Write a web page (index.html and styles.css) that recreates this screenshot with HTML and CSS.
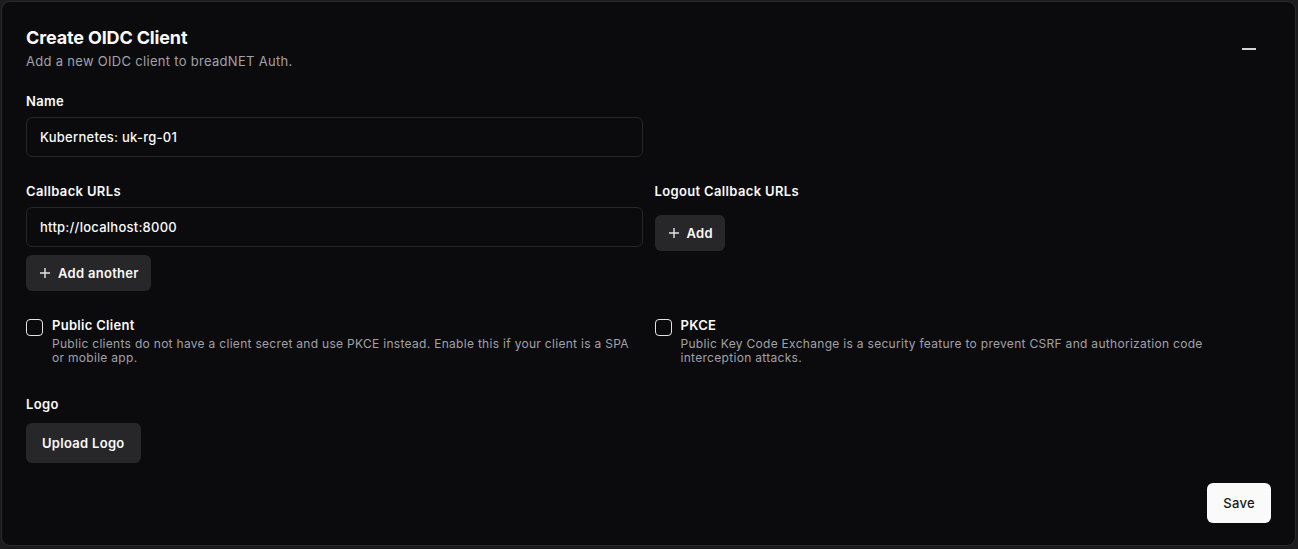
FILE: index.html
```html
<!DOCTYPE html>
<html lang="en">
<head>
<meta charset="utf-8">
<title>Create OIDC Client</title>
<link rel="stylesheet" href="styles.css">
</head>
<body>
<div class="card">
  <div class="header">
    <div class="heading">
      <h1 class="title">Create OIDC Client</h1>
      <p class="subtitle">Add a new OIDC client to breadNET Auth.</p>
    </div>
    <button class="icon-btn" aria-label="Collapse">
      <svg width="24" height="24" viewBox="0 0 24 24" fill="none" stroke="currentColor" stroke-width="2" stroke-linecap="butt"><path d="M5 12h14"/></svg>
    </button>
  </div>

  <div class="form">
    <div class="field">
      <label class="label">Name</label>
      <div class="input">Kubernetes: uk-rg-01</div>
    </div>
    <div></div>

    <div class="field">
      <label class="label">Callback URLs</label>
      <div class="input">http://localhost:8000</div>
      <button class="btn btn-secondary btn-sm add-btn"><svg class="plus" width="14" height="14" viewBox="0 0 14 14" fill="none" stroke="currentColor" stroke-width="1.4"><path d="M2 7h10M7 2v10"/></svg>Add another</button>
    </div>
    <div class="field">
      <label class="label">Logout Callback URLs</label>
      <button class="btn btn-secondary btn-sm add-btn"><svg class="plus" width="14" height="14" viewBox="0 0 14 14" fill="none" stroke="currentColor" stroke-width="1.4"><path d="M2 7h10M7 2v10"/></svg>Add</button>
    </div>

    <div class="check">
      <span class="box"></span>
      <div class="check-text">
        <div class="check-label">Public Client</div>
        <div class="check-desc">Public clients do not have a client secret and use PKCE instead. Enable this if your client is a SPA or mobile app.</div>
      </div>
    </div>
    <div class="check">
      <span class="box"></span>
      <div class="check-text">
        <div class="check-label">PKCE</div>
        <div class="check-desc">Public Key Code Exchange is a security feature to prevent CSRF and authorization code interception attacks.</div>
      </div>
    </div>

    <div class="field logo-field">
      <label class="label">Logo</label>
      <button class="btn btn-secondary upload-btn">Upload Logo</button>
    </div>
  </div>

  <div class="footer">
    <button class="btn btn-primary">Save</button>
  </div>
</div>
</body>
</html>
```

FILE: styles.css
```css
* { box-sizing: border-box; }

html, body {
  margin: 0;
  padding: 0;
}

body {
  background: #1c1c1f;
  font-family: Inter, "Noto Sans", "Liberation Sans", sans-serif;
  color: #fafafa;
  width: 1298px;
  height: 549px;
  overflow: hidden;
  padding: 1px 2px 0 1px;
}

.card {
  width: 1295px;
  height: 545px;
  background: #0b0b0d;
  border: 1px solid #2a2a2e;
  border-radius: 9px;
  padding: 24px 24px 22px 24px;
  display: flex;
  flex-direction: column;
}

.header {
  display: flex;
  justify-content: space-between;
  align-items: flex-start;
}

.title {
  margin: 0;
  font-size: 18px;
  line-height: 24px;
  font-weight: 700;
  letter-spacing: -0.15px;
}

.subtitle {
  margin: 1px 0 0;
  font-size: 13px;
  line-height: 20px;
  color: #a1a1aa;
  letter-spacing: 0.3px;
}

.icon-btn {
  background: none;
  border: none;
  padding: 0;
  margin: 11px 10px 0 0;
  width: 24px;
  height: 24px;
  color: #d4d4d8;
  display: flex;
}

.form {
  margin-top: 20px;
  display: grid;
  grid-template-columns: 1fr 1fr;
  column-gap: 12px;
  row-gap: 24px;
}

.field {
  display: flex;
  flex-direction: column;
  align-items: flex-start;
}

.label {
  font-size: 13px;
  line-height: 20px;
  font-weight: 600;
  letter-spacing: 0.35px;
  margin-bottom: 6px;
}

.input {
  width: 100%;
  height: 40px;
  border: 1px solid #27272a;
  border-radius: 6px;
  padding: 0 13px;
  display: flex;
  align-items: center;
  font-size: 13px;
  font-weight: 500;
  letter-spacing: 0.25px;
  color: #fafafa;
  background: #0b0b0d;
}

.btn {
  font-family: inherit;
  border: none;
  border-radius: 6px;
  font-size: 13px;
  font-weight: 600;
  letter-spacing: 0.3px;
  cursor: pointer;
  display: inline-flex;
  align-items: center;
}

.btn-secondary {
  background: #27272a;
  color: #fafafa;
}

.btn-sm {
  height: 36px;
  padding: 0 12px;
}

.add-btn {
  margin-top: 8px;
}

.plus {
  flex: none;
  margin-right: 6px;
  color: #e4e4e7;
}

.check {
  display: flex;
  align-items: flex-start;
  gap: 9px;
}

.box {
  flex: none;
  width: 17px;
  height: 17px;
  border: 1px solid #e4e4e7;
  border-radius: 4px;
  margin-top: 4px;
}

.check-label {
  font-size: 13px;
  line-height: 20px;
  font-weight: 600;
  letter-spacing: 0.3px;
}

.check-desc {
  margin-top: 2px;
  font-size: 12px;
  line-height: 14px;
  color: #a1a1aa;
  letter-spacing: 0.3px;
}

.logo-field {
  margin-top: 5px;
}

.upload-btn {
  height: 40px;
  padding: 0 16px;
  margin-top: 3px;
}

.footer {
  margin-top: 20px;
  display: flex;
  justify-content: flex-end;
}

.btn-primary {
  background: #fafafa;
  color: #18181b;
  height: 40px;
  padding: 0 16px;
  font-weight: 500;
}
```
